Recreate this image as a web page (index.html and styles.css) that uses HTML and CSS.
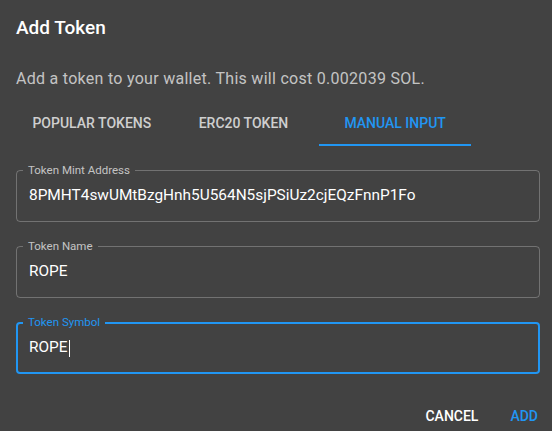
FILE: index.html
```html
<!DOCTYPE html>
<html lang="en">
<head>
<meta charset="utf-8">
<title>Add Token</title>
<link rel="stylesheet" href="styles.css">
</head>
<body>
<div class="dialog">
  <h2 class="title">Add Token</h2>
  <p class="desc">Add a token to your wallet. This will cost 0.002039 SOL.</p>
  <div class="tabs">
    <div class="tab">Popular Tokens</div>
    <div class="tab">ERC20 Token</div>
    <div class="tab active">Manual Input</div>
  </div>
  <div class="fields">
    <div class="field">
      <span class="label">Token Mint Address</span>
      <div class="value">8PMHT4swUMtBzgHnh5U564N5sjPSiUz2cjEQzFnnP1Fo</div>
    </div>
    <div class="field">
      <span class="label">Token Name</span>
      <div class="value">ROPE</div>
    </div>
    <div class="field focused">
      <span class="label">Token Symbol</span>
      <div class="value">ROPE<span class="caret"></span></div>
    </div>
  </div>
  <div class="actions">
    <button class="btn">Cancel</button>
    <button class="btn primary">Add</button>
  </div>
</div>
</body>
</html>
```

FILE: styles.css
```css
html, body {
  margin: 0;
  padding: 0;
  background: #424242;
  width: 552px;
  height: 431px;
  overflow: hidden;
}
.dialog {
  font-family: Roboto, "Liberation Sans", sans-serif;
  color: #fff;
  display: flex;
  flex-direction: column;
  padding: 12px 0 0 16px;
}
.title {
  margin: 0;
  font-size: 19px;
  font-weight: 500;
  line-height: 32px;
  letter-spacing: 0;
}
.desc {
  margin: 23px 0 0;
  font-size: 16px;
  line-height: 24px;
  color: rgba(255, 255, 255, 0.7);
  letter-spacing: 0.28px;
}
.tabs {
  margin-top: 7px;
  display: flex;
  height: 48px;
}
.tab {
  width: 151.67px;
  box-sizing: border-box;
  display: flex;
  align-items: center;
  justify-content: center;
  padding-top: 3px;
  font-size: 14px;
  font-weight: 500;
  text-transform: uppercase;
  letter-spacing: 0;
  color: rgba(255, 255, 255, 0.75);
  border-bottom: 2px solid transparent;
}
.tab.active {
  color: #2196f3;
  border-bottom-color: #2196f3;
}
.fields {
  margin-top: 24px;
  display: flex;
  flex-direction: column;
  gap: 24px;
  width: 524px;
}
.field {
  position: relative;
  box-sizing: border-box;
  height: 52px;
  border: 1px solid rgba(255, 255, 255, 0.26);
  border-radius: 4px;
  display: flex;
  align-items: center;
  padding: 0 12px 1px;
}
.label {
  position: absolute;
  top: -7px;
  left: 6px;
  padding: 0 5px;
  background: #424242;
  font-size: 11.5px;
  line-height: 12px;
  color: rgba(255, 255, 255, 0.7);
  letter-spacing: 0;
}
.value {
  font-size: 15.4px;
  line-height: 19px;
  letter-spacing: 0;
  color: #fff;
}
.field.focused {
  border: 2px solid #2196f3;
  padding: 0 11px 1px;
}
.field.focused .label {
  top: -8px;
  left: 5px;
  color: #2196f3;
}
.caret {
  display: inline-block;
  width: 1px;
  height: 17px;
  margin-left: 1px;
  background: #fff;
  vertical-align: -5px;
}
.actions {
  margin-top: 24px;
  display: flex;
  justify-content: flex-end;
  gap: 16px;
  padding-right: 6px;
}
.btn {
  font-family: Roboto, "Liberation Sans", sans-serif;
  background: none;
  border: 0;
  height: 36px;
  padding: 6px 8px;
  font-size: 14px;
  font-weight: 500;
  line-height: 24px;
  letter-spacing: 0;
  text-transform: uppercase;
  color: #fff;
}
.btn.primary {
  color: #2196f3;
}
```
